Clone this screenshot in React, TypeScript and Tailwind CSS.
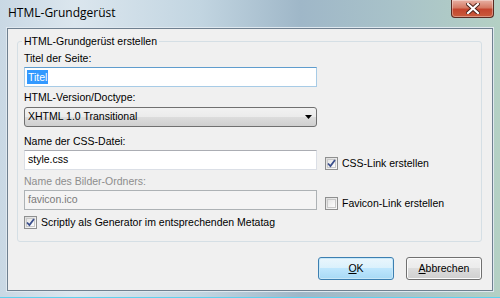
import React from "react";

const font = "font-['Liberation_Sans',Arial,sans-serif]";

const Check = ({ checked }: { checked?: boolean }) => (
  <span className="flex h-[13px] w-[13px] shrink-0 items-center justify-center border border-[#8e8f8f] bg-[linear-gradient(135deg,#dcdcdc,#fbfbfb)]">
    <span className="flex h-[9px] w-[9px] items-center justify-center border border-[#c9c9c9] bg-[linear-gradient(135deg,#e6e6e6,#fdfdfd)]">
      {checked && (
        <svg width="9" height="9" viewBox="0 0 9 9" className="overflow-visible">
          <path d="M1 4.5 L3.4 7 L8 1" fill="none" stroke="#3b4f8c" strokeWidth="1.8" />
        </svg>
      )}
    </span>
  </span>
);

const Label = ({ children, disabled }: { children: React.ReactNode; disabled?: boolean }) => (
  <div className={`h-[13px] leading-[13px] ${disabled ? "text-[#8d8d8d]" : "text-black"}`}>{children}</div>
);

export default function App() {
  return (
    <div
      className={`flex h-[298px] w-[500px] flex-col overflow-hidden bg-[linear-gradient(90deg,#c9d8e4_0%,#dbe6ee_15%,#c2d5e1_40%,#9fb7c8_60%,#a9c3c9_80%,#b4d0c4_100%)] ${font}`}
    >
      {/* title bar */}
      <div className="flex h-[28px] shrink-0 items-start justify-between">
        <div className="pl-[8px] pt-[6px] font-['Open_Sans',sans-serif] text-[12px] leading-[14px] text-black">
          HTML-Grundgerüst
        </div>
        <div className="mr-[6px] flex h-[18px] w-[43px] items-center justify-center rounded-b-[4px] border border-t-0 border-[#5a2a22] bg-[linear-gradient(180deg,#e8b1a4_0%,#d57a64_45%,#c4452e_55%,#c95b3c_100%)] shadow-[inset_0_0_0_1px_rgba(255,255,255,0.35)]">
          <svg width="14" height="11" viewBox="0 0 14 11">
            <path d="M2 1 L12 10 M12 1 L2 10" stroke="#4a2018" strokeWidth="4" strokeLinecap="square" />
            <path d="M2 1 L12 10 M12 1 L2 10" stroke="#ffffff" strokeWidth="2.2" strokeLinecap="square" />
          </svg>
        </div>
      </div>

      {/* client area */}
      <div className="mx-[7px] mb-[6px] flex flex-1 flex-col border border-[#6f8090] bg-[#f0f0f0] text-[10.5px] shadow-[0_0_0_1px_#dfe8ef]">
        <fieldset className="ml-[9px] mr-[10px] mt-[6px] rounded-[3px] border border-[#d5dfe5] pb-[12px] pl-[6px]">
          <legend className="-ml-[2px] px-[2px] leading-[13px]">HTML-Grundgerüst erstellen</legend>

          <div className="mt-[4px]">
            <Label>Titel der Seite:</Label>
          </div>
          <div className="mt-[2px] flex h-[20px] w-[293px] items-center border border-[#a7cbe6] border-t-[#5f9ccd] bg-white pl-[2px]">
            <span className="bg-[#3399ff] px-[1px] leading-[14px] text-white">Titel</span>
          </div>

          <div className="mt-[4px]">
            <Label>HTML-Version/Doctype:</Label>
          </div>
          <div className="mt-[3px] flex h-[20px] w-[293px] items-center justify-between rounded-[3px] border border-[#707070] bg-[linear-gradient(180deg,#f2f2f2_0%,#ebebeb_50%,#dddddd_50%,#cfcfcf_100%)] pl-[3px] pr-[4px]">
            <span>XHTML 1.0 Transitional</span>
            <svg width="7" height="4" viewBox="0 0 7 4">
              <path d="M0 0 H7 L3.5 4 Z" fill="#000" />
            </svg>
          </div>

          <div className="mt-[8px]">
            <Label>Name der CSS-Datei:</Label>
          </div>
          <div className="mt-[2px] flex items-start gap-[8px]">
            <div className="flex h-[20px] w-[293px] items-center border border-[#dbdfe6] border-t-[#abadb3] bg-white pl-[3px]">
              style.css
            </div>
            <label className="mt-[7px] flex items-center gap-[4px]">
              <Check checked />
              <span className="leading-[13px]">CSS-Link erstellen</span>
            </label>
          </div>

          <div className="mt-[5px]">
            <Label disabled>Name des Bilder-Ordners:</Label>
          </div>
          <div className="mt-[2px] flex items-start gap-[8px]">
            <div className="flex h-[20px] w-[293px] items-center border border-[#adb2b5] bg-[#f4f4f4] pl-[3px] text-[#7a7a7a]">
              favicon.ico
            </div>
            <label className="mt-[7px] flex items-center gap-[4px]">
              <Check />
              <span className="leading-[13px]">Favicon-Link erstellen</span>
            </label>
          </div>

          <label className="mt-[6px] flex items-center gap-[4px]">
            <Check checked />
            <span className="leading-[13px]">Scriptly als Generator im entsprechenden Metatag</span>
          </label>
        </fieldset>

        <div className="mr-[10px] mt-[15px] flex justify-end gap-[12px]">
          <button className="h-[23px] w-[76px] rounded-[3px] border border-[#3c7fb1] bg-[linear-gradient(180deg,#eaf6fd_0%,#d9f0fc_50%,#bee6fd_50%,#a7d9f5_100%)] text-[10.5px] shadow-[inset_0_0_0_1px_#c8e8f8]">
            <span className="underline">O</span>K
          </button>
          <button className="h-[23px] w-[76px] rounded-[3px] border border-[#707070] bg-[linear-gradient(180deg,#f2f2f2_0%,#ebebeb_50%,#dddddd_50%,#cfcfcf_100%)] text-[10.5px] shadow-[inset_0_0_0_1px_#fcfcfc]">
            <span className="underline">A</span>bbrechen
          </button>
        </div>
      </div>
      <div className="h-px shrink-0 bg-[#5fd0ee]" />
    </div>
  );
}
